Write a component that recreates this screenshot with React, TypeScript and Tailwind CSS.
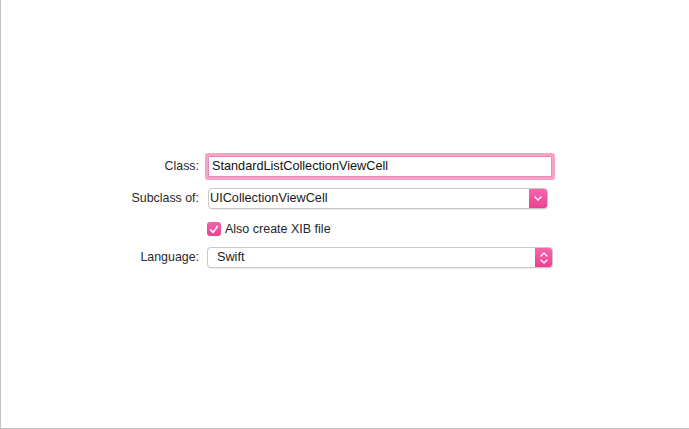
import React from 'react';

const FONT = { fontFamily: '"Liberation Sans", Arial, sans-serif' };

function Row({ label, children }: { label: string; children: React.ReactNode }) {
  return (
    <div className="flex items-center h-[21px]">
      <div className="w-[198px] text-right text-[12.4px] text-[#2a2a2a]">{label}</div>
      <div className="ml-[9px] flex">{children}</div>
    </div>
  );
}

function PopupButton({ value, width, kind }: { value: string; width: number; kind: 'down' | 'updown' }) {
  return (
    <div
      className="flex h-[21px] rounded-[4px] border border-[#c9c9c9] bg-white shadow-[0_0.5px_1px_rgba(0,0,0,0.08)] overflow-hidden"
      style={{ width }}
    >
      <div className={`flex-1 flex items-center text-[12.7px] text-[#1a1a1a] ${kind === 'down' ? 'pl-[1px]' : 'pl-[9px]'}`}>
        {value}
      </div>
      <div
        className={`flex items-center justify-center bg-gradient-to-b from-[#f466ad] to-[#ec3f92] ${kind === 'down' ? 'w-[18px]' : 'w-[17px]'}`}
      >
        {kind === 'down' ? (
          <svg width={8} height={5} viewBox="0 0 8 5" fill="none" stroke="white" strokeWidth={1.4} strokeLinecap="round" strokeLinejoin="round">
            <polyline points="1 1 4 4 7 1" />
          </svg>
        ) : (
          <svg width={8} height={12} viewBox="0 0 8 12" fill="none" stroke="white" strokeWidth={1.3} strokeLinecap="round" strokeLinejoin="round">
            <polyline points="1 4 4 1 7 4" />
            <polyline points="1 8 4 11 7 8" />
          </svg>
        )}
      </div>
    </div>
  );
}

export default function App() {
  return (
    <div className="w-full h-[429px] bg-white border-l border-b border-[#c2c2c2] overflow-hidden" style={FONT}>
      <div className="pt-[156px] flex flex-col">
        {/* Class */}
        <Row label="Class:">
          <div className="w-[344px] h-[21px] border border-[#ea86b3] bg-white shadow-[0_0_0_3px_#f6a2c7] rounded-[1px] flex items-center pl-[3px] text-[12.7px] text-[#111]">
            StandardListCollectionViewCell
          </div>
        </Row>

        {/* Subclass */}
        <div className="mt-[11px]">
          <Row label="Subclass of:">
            <PopupButton value="UICollectionViewCell" width={340} kind="down" />
          </Row>
        </div>

        {/* Checkbox */}
        <div className="mt-[13px] flex items-center h-[14px] pl-[206px]">
          <div className="w-[14px] h-[14px] rounded-[3px] bg-gradient-to-b from-[#f461aa] to-[#ec4193] flex items-center justify-center">
            <svg width={10} height={9} viewBox="0 0 10 9" fill="none" stroke="white" strokeWidth={1.6} strokeLinecap="round" strokeLinejoin="round">
              <polyline points="1.5 4.8 4 7.5 8.5 1.3" />
            </svg>
          </div>
          <span className="ml-[4px] text-[12.5px] text-[#262626]">Also create XIB file</span>
        </div>

        {/* Language */}
        <div className="mt-[11px]">
          <Row label="Language:">
            <div className="-ml-[1px]">
              <PopupButton value="Swift" width={346} kind="updown" />
            </div>
          </Row>
        </div>
      </div>
    </div>
  );
}
